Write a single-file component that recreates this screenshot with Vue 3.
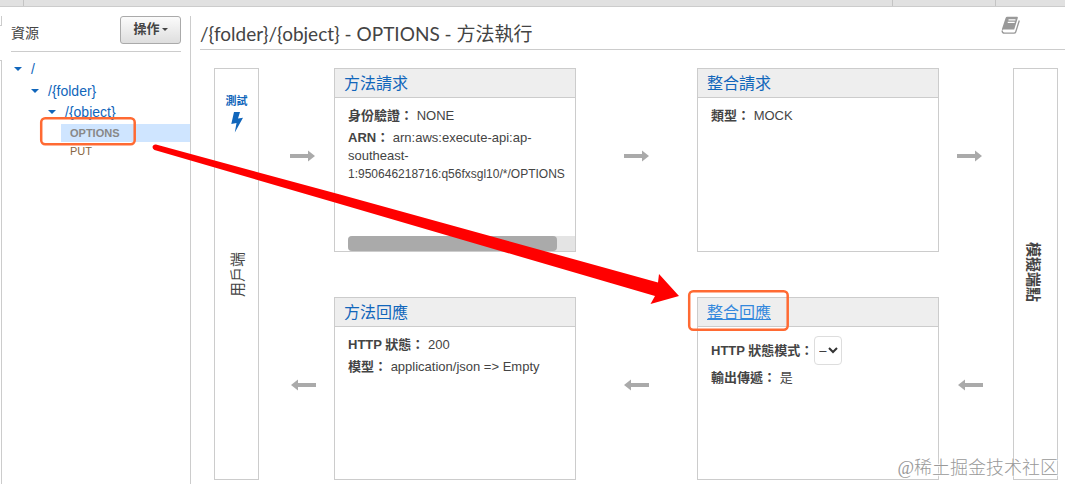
<script setup>
import { ref } from 'vue'

const pattern = ref('–')
const tree = [
  { label: '/', level: 1 },
  { label: '/{folder}', level: 2 },
  { label: '/{object}', level: 3 },
]
</script>

<template>
  <div class="page">
    <div class="strip"><span></span><span></span><span></span></div>
    <div class="layout">
      <div class="rail"><i class="rail-top"></i><i class="rail-rest"></i></div>
      <aside class="sidebar">
        <div class="side-head">
          <span class="side-title">資源</span>
          <button type="button" class="action">操作<i class="caret"></i></button>
        </div>
        <nav class="tree">
          <a v-for="n in tree" :key="n.label" href="#" class="node" :class="'level-' + n.level">
            <i class="caret"></i>{{ n.label }}
          </a>
          <a href="#" class="method selected">OPTIONS</a>
          <a href="#" class="method put">PUT</a>
        </nav>
      </aside>
      <main class="main">
        <header class="title-bar">
          <h1>/{folder}/{object} - OPTIONS - 方法執行</h1>
          <svg class="book" width="20" height="19" viewBox="0 0 20 19" aria-hidden="true">
            <path d="M6.2.8h9.900q1 0 .7 1.200L13.200 13.500H2.600q-1.200 0-1.500 1.200-.3-1 0-2.200L4.600 2Q5 .8 6.200.8Z" fill="#999" />
            <path d="M7.500 3.800h7M6.700 6.300h7" stroke="#fff" stroke-width="1.200" />
            <path d="M1.100 14.500q0 2.700 2.400 2.700H13q1.300 0 1.700-1.200L18.300 4.500" fill="none" stroke="#999" stroke-width="1.300" />
          </svg>
        </header>
        <div class="flow">
          <section class="endpoint client">
            <a href="#" class="test">測試
              <svg width="12" height="21" viewBox="0 0 12 21" aria-hidden="true">
                <path d="M3 0h6L7 6.500l5-.8L3.800 20.500 5.500 11 .3 12z" fill="#1166bb" />
              </svg>
            </a>
            <span class="vertical up">用戶端</span>
          </section>
          <svg class="arrow a1" width="25" height="12" viewBox="0 0 25 12" aria-hidden="true"><path d="M0 4h18V.5L25 6l-7 5.500V8H0z" /></svg>
          <section class="card c1">
            <h2><a href="#">方法請求</a></h2>
            <div class="body">
              <p><b>身份驗證：</b> NONE</p>
              <p><b>ARN：</b> arn:aws:execute-api:ap-<br>southeast-<br><span class="arn-id">1:950646218716:q56fxsgl10/*/OPTIONS</span></p>
            </div>
            <div class="scroll"><i></i></div>
          </section>
          <svg class="arrow a2" width="25" height="12" viewBox="0 0 25 12" aria-hidden="true"><path d="M0 4h18V.5L25 6l-7 5.500V8H0z" /></svg>
          <section class="card c2">
            <h2><a href="#">整合請求</a></h2>
            <div class="body"><p><b>類型：</b> MOCK</p></div>
          </section>
          <svg class="arrow a3" width="25" height="12" viewBox="0 0 25 12" aria-hidden="true"><path d="M0 4h18V.5L25 6l-7 5.500V8H0z" /></svg>
          <svg class="arrow b1" width="25" height="12" viewBox="0 0 25 12" aria-hidden="true"><path d="M25 4H7V.5L0 6l7 5.500V8h18z" /></svg>
          <section class="card c3">
            <h2><a href="#">方法回應</a></h2>
            <div class="body">
              <p><b>HTTP 狀態：</b> 200</p>
              <p><b>模型：</b> application/json =&gt; Empty</p>
            </div>
          </section>
          <svg class="arrow b2" width="25" height="12" viewBox="0 0 25 12" aria-hidden="true"><path d="M25 4H7V.5L0 6l7 5.500V8h18z" /></svg>
          <section class="card c4">
            <h2><a href="#" class="hovered">整合回應</a></h2>
            <div class="body">
              <div class="field">
                <label for="pattern">HTTP 狀態模式：</label>
                <span class="select-wrap">
                  <select id="pattern" v-model="pattern"><option>–</option></select>
                  <svg width="10" height="7" viewBox="0 0 10 7" aria-hidden="true"><path d="M1 1l4 4 4-4" fill="none" stroke="#333" stroke-width="2" /></svg>
                </span>
              </div>
              <p><b>輸出傳遞：</b> 是</p>
            </div>
          </section>
          <svg class="arrow b3" width="25" height="12" viewBox="0 0 25 12" aria-hidden="true"><path d="M25 4H7V.5L0 6l7 5.500V8h18z" /></svg>
          <section class="endpoint mock"><span class="vertical">模擬端點</span></section>
        </div>
      </main>
    </div>
    <svg class="marks" width="1065" height="484" viewBox="0 0 1065 484" aria-hidden="true">
      <g fill="none" stroke="#ff6a33" stroke-width="2.500">
        <rect x="41.200" y="118.200" width="93.500" height="26" rx="4" />
        <rect x="689.200" y="291.200" width="98.500" height="38.500" rx="4" />
      </g>
      <path d="M156 144.500L340 194.500 658 282.500 659 274 679 296 650.500 304 655 296 340 204 154.500 150Q152 148.500 152.700 146.200 153.600 144 156 144.500Z" fill="#f00" />
    </svg>
    <div class="watermark">@稀土掘金技术社区</div>
  </div>
</template>

<style>
body { background: #fff; }
</style>

<style scoped>
* { box-sizing: border-box; }
.page {
  position: relative;
  min-height: 100vh;
  display: flex;
  flex-direction: column;
  overflow: hidden;
  color: #444;
  font: 13px/18px "Liberation Sans", "Noto Sans CJK TC", sans-serif;
}
a { color: #1166bb; text-decoration: none; }
.strip {
  height: 7px;
  display: grid;
  grid-template-columns: 24px 1fr 103px 69px;
  background: #e1e1e1;
  border-bottom: 1px solid #ccc;
}
.strip span { border-right: 1px solid #c4c4c4; }
.layout { flex: 1; display: flex; padding-top: 9px; }
.rail { width: 2px; display: flex; flex-direction: column; gap: 34px; }
.rail i { border: 1px solid #ccc; border-left: 0; }
.rail .rail-top { height: 10px; border-top: 0; }
.rail .rail-rest { flex: 1; border-bottom: 0; }
.sidebar { width: 189px; border-right: 1px solid #ccc; }
.side-head {
  display: flex;
  justify-content: space-between;
  height: 36px;
  margin: 0 9px;
  border-bottom: 1px solid #ccc;
}
.side-title { font-size: 14px; line-height: 34px; }
.action {
  height: 28px;
  width: 61px;
  display: flex;
  align-items: center;
  justify-content: center;
  gap: 2px;
  padding: 0 0 2px;
  border: 1px solid #aaa;
  border-radius: 3px;
  background: linear-gradient(#fbfbfb, #dedede);
  color: #444;
  font: bold 13px/18px "Liberation Sans", "Noto Sans CJK TC", sans-serif;
}
.caret { border: 4px solid transparent; border-top-color: currentColor; border-bottom: 0; }
.action .caret { border-width: 3px; border-bottom: 0; }
.tree { padding-top: 6px; }
.node { display: flex; align-items: center; gap: 9px; height: 22px; font-size: 14px; }
.level-1 { padding-left: 12px; }
.level-2 { padding-left: 29px; }
.level-3 { padding-left: 46px; height: 20px; margin-bottom: 2px; }
.method { display: block; margin-left: 59px; padding-left: 9px; font-size: 11px; line-height: 18px; }
.selected { background: #cfe5ff; color: #888; font-weight: bold; }
.put { color: #876642; }
.main { flex: 1; min-width: 0; padding-left: 9px; }
.title-bar {
  height: 34px;
  display: flex;
  justify-content: space-between;
  padding-right: 44px;
  border-bottom: 1px solid #ccc;
}
h1 { margin: 0; font: 19px/36px Lato, "Noto Sans CJK TC", sans-serif; }
.flow {
  display: grid;
  grid-template-columns: 45px 75fr 242fr 121fr 242fr 74fr 45px;
  grid-template-rows: 184px 183px;
  row-gap: 45px;
  margin: 18px 7px 4px 14px;
}
.endpoint {
  grid-row: 1 / 3;
  display: flex;
  align-items: center;
  justify-content: center;
  position: relative;
  border: 1px solid #ccc;
  font-size: 15px;
}
.client { grid-column: 1; padding: 2px 0 0 2px; }
.mock { grid-column: 7; padding: 0 5px 4px 0; font-weight: bold; }
.vertical { writing-mode: vertical-rl; text-orientation: sideways; }
.up { transform: rotate(180deg); }
.test {
  position: absolute;
  top: 23px;
  left: 0;
  right: 0;
  display: flex;
  flex-direction: column;
  align-items: center;
  gap: 2px;
  font-size: 11px;
  font-weight: bold;
}
.arrow { align-self: center; justify-self: center; margin-bottom: 8px; fill: #aaa; }
.a1, .a2, .a3 { grid-row: 1; }
.b1, .b2, .b3 { grid-row: 2; }
.a1 { grid-column: 2; margin-left: 12px; }
.b1 { grid-column: 2; margin-left: 14px; }
.a2, .b2 { grid-column: 4; }
.a3 { grid-column: 6; margin-right: 14px; }
.b3 { grid-column: 6; margin-right: 12px; }
.card { display: flex; flex-direction: column; min-width: 0; border: 1px solid #ccc; overflow: hidden; }
.c1 { grid-area: 1 / 3; }
.c2 { grid-area: 1 / 5; }
.c3 { grid-area: 2 / 3; }
.c4 { grid-area: 2 / 5; }
h2 {
  margin: 0;
  padding: 2px 0 0 9px;
  background: #eee;
  border-bottom: 1px solid #ccc;
  font-size: 16px;
  font-weight: normal;
  line-height: 26px;
}
.hovered { color: #3388dd; text-decoration: underline; }
.body { flex: 1; padding: 9px 0 0 13px; }
p { margin: 0 0 4px; white-space: nowrap; }
.arn-id { font-size: 12px; }
.scroll { height: 15px; margin-left: 13px; background: #e4e4e4; border-radius: 4px 0 0 4px; }
.scroll i { display: block; width: 92%; height: 100%; background: #aaa; border-radius: 4px; }
.field { display: flex; align-items: center; gap: 1px; margin-bottom: 4px; }
.field label { font-weight: bold; }
.select-wrap { position: relative; }
.select-wrap svg { position: absolute; right: 4px; top: 11px; pointer-events: none; }
select {
  display: block;
  appearance: none;
  width: 28px;
  height: 29px;
  padding: 0 0 0 4px;
  border: 1px solid #ddd;
  border-radius: 4px;
  background: #fff;
  color: #333;
  font: 13px/18px "Liberation Sans", sans-serif;
}
.marks { position: absolute; top: 0; left: 0; pointer-events: none; }
.watermark {
  position: absolute;
  right: 7px;
  bottom: 3px;
  color: #999;
  font: 300 18px/26px "Liberation Serif", "Noto Sans CJK SC", sans-serif;
  text-shadow: 0 0 2px #fff, 1px 1px 1px #fff, -1px -1px 1px #fff;
}
</style>
